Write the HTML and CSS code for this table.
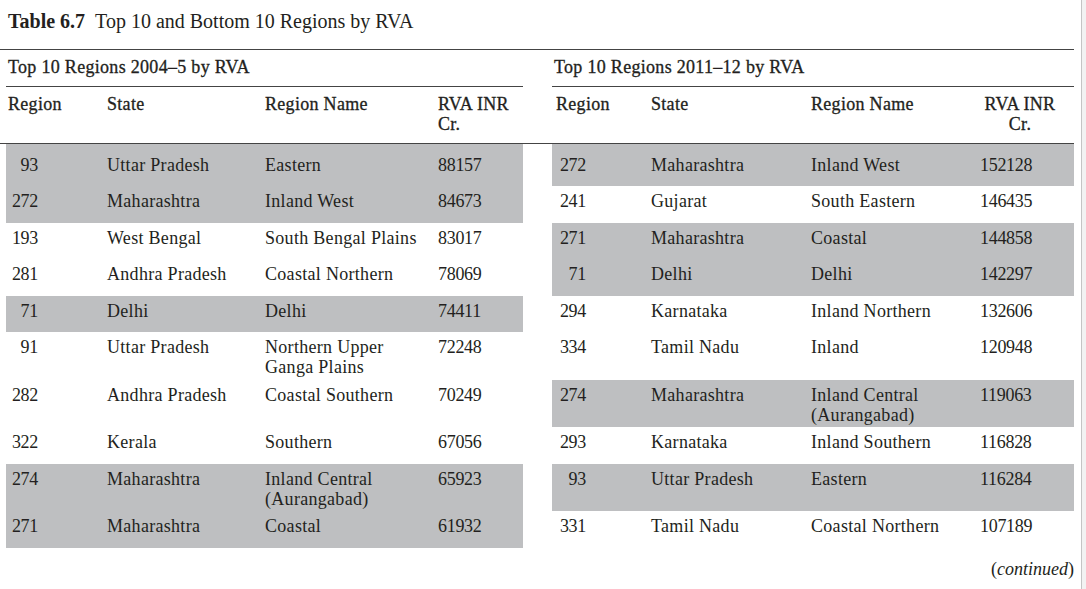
FILE: index.html
```html
<!DOCTYPE html>
<html lang="en">
<head>
<meta charset="utf-8">
<title>Table 6.7</title>
<link rel="stylesheet" href="styles.css">
</head>
<body>
<div class="page">
  <div class="sheet">
    <h1 class="title"><b>Table 6.7</b>&nbsp;&nbsp;Top 10 and Bottom 10 Regions by RVA</h1>

    <div class="row sub-row">
      <div class="half left"><div class="subtitle">Top 10 Regions 2004–5 by RVA</div></div>
      <div class="half right"><div class="subtitle">Top 10 Regions 2011–12 by RVA</div></div>
    </div>

    <div class="row head-row">
      <div class="half left">
        <div class="c c1">Region</div><div class="c c2">State</div><div class="c c3">Region Name</div><div class="c c4">RVA INR<br>Cr.</div>
      </div>
      <div class="half right">
        <div class="c c1">Region</div><div class="c c2">State</div><div class="c c3">Region Name</div><div class="c c4 rva-head">RVA INR<br>Cr.</div>
      </div>
    </div>

    <div class="row body-row first">
      <div class="half left shade"><div class="c c1"><span class="n">93</span></div><div class="c c2">Uttar Pradesh</div><div class="c c3">Eastern</div><div class="c c4 num">88157</div></div>
      <div class="half right shade"><div class="c c1"><span class="n">272</span></div><div class="c c2">Maharashtra</div><div class="c c3">Inland West</div><div class="c c4 num">152128</div></div>
    </div>
    <div class="row body-row">
      <div class="half left shade"><div class="c c1"><span class="n">272</span></div><div class="c c2">Maharashtra</div><div class="c c3">Inland West</div><div class="c c4 num">84673</div></div>
      <div class="half right"><div class="c c1"><span class="n">241</span></div><div class="c c2">Gujarat</div><div class="c c3">South Eastern</div><div class="c c4 num">146435</div></div>
    </div>
    <div class="row body-row">
      <div class="half left"><div class="c c1"><span class="n">193</span></div><div class="c c2">West Bengal</div><div class="c c3">South Bengal Plains</div><div class="c c4 num">83017</div></div>
      <div class="half right shade"><div class="c c1"><span class="n">271</span></div><div class="c c2">Maharashtra</div><div class="c c3">Coastal</div><div class="c c4 num">144858</div></div>
    </div>
    <div class="row body-row">
      <div class="half left"><div class="c c1"><span class="n">281</span></div><div class="c c2">Andhra Pradesh</div><div class="c c3">Coastal Northern</div><div class="c c4 num">78069</div></div>
      <div class="half right shade"><div class="c c1"><span class="n">71</span></div><div class="c c2">Delhi</div><div class="c c3">Delhi</div><div class="c c4 num">142297</div></div>
    </div>
    <div class="row body-row">
      <div class="half left shade"><div class="c c1"><span class="n">71</span></div><div class="c c2">Delhi</div><div class="c c3">Delhi</div><div class="c c4 num">74411</div></div>
      <div class="half right"><div class="c c1"><span class="n">294</span></div><div class="c c2">Karnataka</div><div class="c c3">Inland Northern</div><div class="c c4 num">132606</div></div>
    </div>
    <div class="row body-row">
      <div class="half left"><div class="c c1"><span class="n">91</span></div><div class="c c2">Uttar Pradesh</div><div class="c c3">Northern Upper<br>Ganga Plains</div><div class="c c4 num">72248</div></div>
      <div class="half right"><div class="c c1"><span class="n">334</span></div><div class="c c2">Tamil Nadu</div><div class="c c3">Inland</div><div class="c c4 num">120948</div></div>
    </div>
    <div class="row body-row">
      <div class="half left"><div class="c c1"><span class="n">282</span></div><div class="c c2">Andhra Pradesh</div><div class="c c3">Coastal Southern</div><div class="c c4 num">70249</div></div>
      <div class="half right shade"><div class="c c1"><span class="n">274</span></div><div class="c c2">Maharashtra</div><div class="c c3">Inland Central<br>(Aurangabad)</div><div class="c c4 num">119063</div></div>
    </div>
    <div class="row body-row">
      <div class="half left"><div class="c c1"><span class="n">322</span></div><div class="c c2">Kerala</div><div class="c c3">Southern</div><div class="c c4 num">67056</div></div>
      <div class="half right"><div class="c c1"><span class="n">293</span></div><div class="c c2">Karnataka</div><div class="c c3">Inland Southern</div><div class="c c4 num">116828</div></div>
    </div>
    <div class="row body-row">
      <div class="half left shade"><div class="c c1"><span class="n">274</span></div><div class="c c2">Maharashtra</div><div class="c c3">Inland Central<br>(Aurangabad)</div><div class="c c4 num">65923</div></div>
      <div class="half right shade"><div class="c c1"><span class="n">93</span></div><div class="c c2">Uttar Pradesh</div><div class="c c3">Eastern</div><div class="c c4 num">116284</div></div>
    </div>
    <div class="row body-row">
      <div class="half left shade"><div class="c c1"><span class="n">271</span></div><div class="c c2">Maharashtra</div><div class="c c3">Coastal</div><div class="c c4 num">61932</div></div>
      <div class="half right"><div class="c c1"><span class="n">331</span></div><div class="c c2">Tamil Nadu</div><div class="c c3">Coastal Northern</div><div class="c c4 num">107189</div></div>
    </div>

    <div class="continued">(<i>continued</i>)</div>
  </div>
</div>
</body>
</html>
```

FILE: styles.css
```css
html {
  background: #f2f2f2;
}
body {
  margin: 0;
  font-family: "Liberation Serif", "Times New Roman", serif;
  color: #231f20;
}
.page {
  width: 1081px;
  height: 589px;
  background: #ffffff;
  border-right: 1px solid #c4c4c4;
}
.sheet {
  width: 1074px;
}
.title {
  margin: 0;
  padding: 9px 0 0 8px;
  height: 49px;
  box-sizing: border-box;
  font-size: 20px;
  line-height: 24px;
  font-weight: normal;
}
.title b {
  font-weight: bold;
}
.row {
  display: flex;
  gap: 29px;
  padding-left: 6px;
}
.half {
  display: flex;
}
.half.left {
  width: 517px;
}
.half.right {
  width: 522px;
}
.sub-row {
  border-top: 1px solid #444;
}
.subtitle {
  flex: 1;
  padding: 7px 0 9px 2px;
  line-height: 20px;
  font-size: 18px;
  letter-spacing: 0.3px;
  border-bottom: 1px solid #444;
  -webkit-text-stroke: 0.3px #231f20;
}
.head-row {
  padding-top: 7px;
  padding-bottom: 9px;
  border-bottom: 1px solid #444;
  font-size: 18px;
  line-height: 20px;
  letter-spacing: 0.3px;
  -webkit-text-stroke: 0.3px #231f20;
}
.c {
  box-sizing: border-box;
  padding-left: 2px;
}
.left .c1 { width: 99px; }
.left .c2 { width: 158px; }
.left .c3 { width: 173px; }
.left .c4 { width: 87px; }
.right .c { padding-left: 4px; }
.right .c1 { width: 95px; }
.right .c2 { width: 160px; }
.right .c3 { width: 169px; }
.right .c4 { width: 98px; }
.right .rva-head {
  padding-left: 4px;
  padding-right: 14px;
  text-align: center;
}
.body-row {
  font-size: 18px;
  line-height: 20px;
  letter-spacing: 0.3px;
}
.body-row .half {
  box-sizing: border-box;
  min-height: 36.5px;
  padding-top: 5px;
  padding-bottom: 2.5px;
}
.body-row.first .half {
  min-height: 42px;
  padding-top: 11px;
}
.shade {
  background: #bebfc1;
}
.num,
.n {
  letter-spacing: -0.3px;
}
.n {
  display: inline-block;
  width: 30px;
  text-align: right;
}
.continued {
  margin-top: 11px;
  text-align: right;
  font-size: 18px;
  line-height: 20px;
}
```
